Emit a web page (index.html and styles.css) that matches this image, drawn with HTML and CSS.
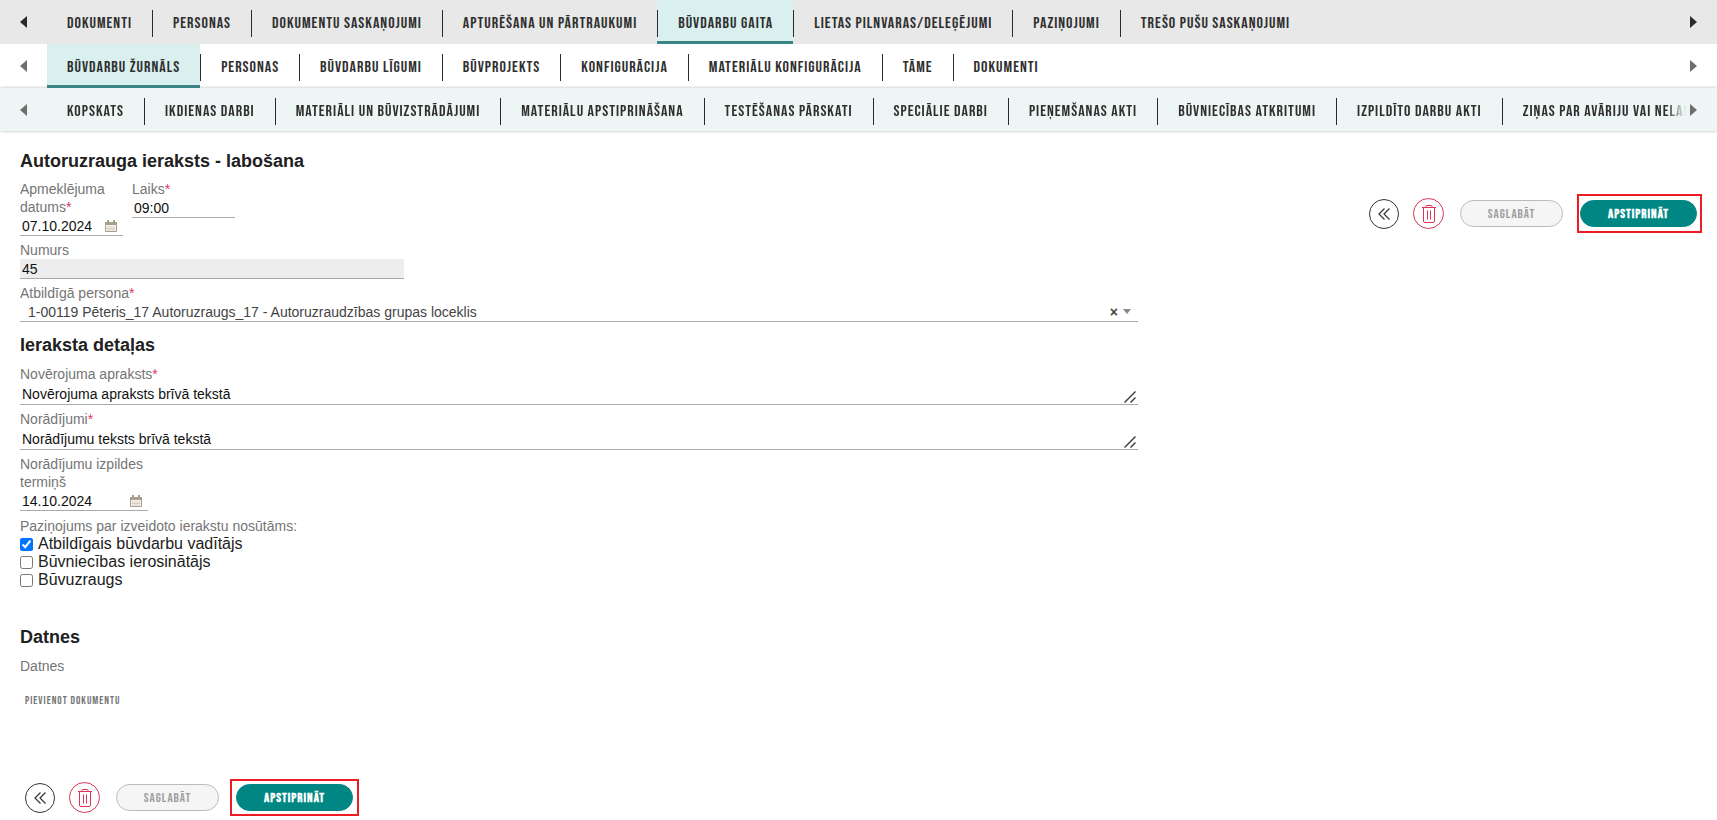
FILE: index.html
```html
<!DOCTYPE html>
<html lang="lv">
<head>
<meta charset="utf-8">
<meta name="viewport" content="width=device-width, initial-scale=1">
<title>Autoruzrauga ieraksts - labošana</title>
<link rel="stylesheet" href="styles.css">
</head>
<body>
<svg class="sprite" aria-hidden="true">
  <symbol id="i-left" viewBox="0 0 7 12"><path d="M7 0v12L0 6z"/></symbol>
  <symbol id="i-right" viewBox="0 0 7 12"><path d="M0 0v12l7-6z"/></symbol>
  <symbol id="i-back" viewBox="0 0 14 14"><path d="M7.500 1.500L2 7l5.500 5.500M12.500 1.500L7 7l5.500 5.500" fill="none" stroke="currentColor" stroke-width="1.200"/></symbol>
  <symbol id="i-trash" viewBox="0 0 16 18"><path d="M1 2.500h14M5 2.500V1.500Q5 .5 6 .5h4q1 0 1 1v1M2.500 2.500v13.500q0 1.500 1.500 1.500h8q1.500 0 1.500-1.500V2.500M6.500 5.500v9M9.500 5.500v9" fill="none" stroke="currentColor"/></symbol>
  <symbol id="i-cal" viewBox="0 0 12 12"><path d="M.5 2.500h11v9H.5z" fill="#f6f2ec" stroke="#a89f90"/><path d="M0 2h12v3H0zM2 0h2v2H2zM8 0h2v2H8z" fill="#a89f90"/><path d="M3 6v5M5 6v5M7 6v5M9 6v5M1 8.500h10" stroke="#c9c1b4" fill="none" stroke-width=".6"/></symbol>
</svg>

<nav class="bar bar-top" aria-label="Lieta">
  <button class="arrow" aria-label="Iepriekšējie"><svg><use href="#i-left"/></svg></button>
  <div class="tabs">
    <a class="tab" href="#">DOKUMENTI</a><a class="tab" href="#">PERSONAS</a><a class="tab" href="#">DOKUMENTU SASKAŅOJUMI</a><a class="tab" href="#">APTURĒŠANA UN PĀRTRAUKUMI</a><a class="tab active" href="#">BŪVDARBU GAITA</a><a class="tab" href="#">LIETAS PILNVARAS/DELEĢĒJUMI</a><a class="tab" href="#">PAZIŅOJUMI</a><a class="tab" href="#">TREŠO PUŠU SASKAŅOJUMI</a>
  </div>
  <button class="arrow" aria-label="Nākamie"><svg><use href="#i-right"/></svg></button>
</nav>
<nav class="bar bar-mid" aria-label="Būvdarbu gaita">
  <button class="arrow" aria-label="Iepriekšējie"><svg><use href="#i-left"/></svg></button>
  <div class="tabs">
    <a class="tab active" href="#">BŪVDARBU ŽURNĀLS</a><a class="tab" href="#">PERSONAS</a><a class="tab" href="#">BŪVDARBU LĪGUMI</a><a class="tab" href="#">BŪVPROJEKTS</a><a class="tab" href="#">KONFIGURĀCIJA</a><a class="tab" href="#">MATERIĀLU KONFIGURĀCIJA</a><a class="tab" href="#">TĀME</a><a class="tab" href="#">DOKUMENTI</a>
  </div>
  <button class="arrow" aria-label="Nākamie"><svg><use href="#i-right"/></svg></button>
</nav>
<nav class="bar bar-low" aria-label="Būvdarbu žurnāls">
  <button class="arrow" aria-label="Iepriekšējie"><svg><use href="#i-left"/></svg></button>
  <div class="tabs fade">
    <a class="tab" href="#">KOPSKATS</a><a class="tab" href="#">IKDIENAS DARBI</a><a class="tab" href="#">MATERIĀLI UN BŪVIZSTRĀDĀJUMI</a><a class="tab" href="#">MATERIĀLU APSTIPRINĀŠANA</a><a class="tab" href="#">TESTĒŠANAS PĀRSKATI</a><a class="tab" href="#">SPECIĀLIE DARBI</a><a class="tab" href="#">PIEŅEMŠANAS AKTI</a><a class="tab" href="#">BŪVNIECĪBAS ATKRITUMI</a><a class="tab" href="#">IZPILDĪTO DARBU AKTI</a><a class="tab" href="#">ZIŅAS PAR AVĀRIJU VAI NELAIMES GADĪJUMU</a>
  </div>
  <button class="arrow" aria-label="Nākamie"><svg><use href="#i-right"/></svg></button>
</nav>

<main class="page">
  <form class="form">
    <h1 class="heading">Autoruzrauga ieraksts - labošana</h1>
    <div class="row">
      <div class="field short">
        <label for="date">Apmeklējuma datums<span class="req">*</span></label>
        <div class="line"><input id="date" value="07.10.2024"><svg class="cal"><use href="#i-cal"/></svg></div>
      </div>
      <div class="field short">
        <label for="time">Laiks<span class="req">*</span></label>
        <div class="line"><input id="time" value="09:00"></div>
      </div>
    </div>
    <div class="field number">
      <label for="num">Numurs</label>
      <div class="line locked"><input id="num" value="45" readonly></div>
    </div>
    <div class="field">
      <label for="person">Atbildīgā persona<span class="req">*</span></label>
      <div class="line pick">
        <select id="person"><option>1-00119 Pēteris_17 Autoruzraugs_17 - Autoruzraudzības grupas loceklis</option></select>
        <button type="button" class="clear" aria-label="Notīrīt">×</button>
        <svg class="caret" viewBox="0 0 8 5"><path d="M0 0h8L4 5z"/></svg>
      </div>
    </div>
    <h2 class="heading details">Ieraksta detaļas</h2>
    <div class="field">
      <label for="obs">Novērojuma apraksts<span class="req">*</span></label>
      <div class="line area"><textarea id="obs" rows="1">Novērojuma apraksts brīvā tekstā</textarea><svg class="grip" viewBox="0 0 12 12"><path d="M.5 11.500l11-11M6.500 11.500l5-5"/></svg></div>
    </div>
    <div class="field">
      <label for="ins">Norādījumi<span class="req">*</span></label>
      <div class="line area"><textarea id="ins" rows="1">Norādījumu teksts brīvā tekstā</textarea><svg class="grip" viewBox="0 0 12 12"><path d="M.5 11.500l11-11M6.500 11.500l5-5"/></svg></div>
    </div>
    <div class="field term">
      <label for="due">Norādījumu izpildes termiņš</label>
      <div class="line"><input id="due" value="14.10.2024"><svg class="cal"><use href="#i-cal"/></svg></div>
    </div>
    <fieldset class="checks">
      <legend>Paziņojums par izveidoto ierakstu nosūtāms:</legend>
      <label><input type="checkbox" checked>Atbildīgais būvdarbu vadītājs</label>
      <label><input type="checkbox">Būvniecības ierosinātājs</label>
      <label><input type="checkbox">Būvuzraugs</label>
    </fieldset>
    <section class="files">
      <h2 class="heading">Datnes</h2>
      <p class="caption">Datnes</p>
      <button type="button" class="attach">PIEVIENOT DOKUMENTU</button>
    </section>
    <div class="actions actions-foot">
      <button type="button" class="round" aria-label="Atpakaļ"><svg class="ic-back"><use href="#i-back"/></svg></button>
      <button type="button" class="round danger" aria-label="Dzēst"><svg class="ic-trash"><use href="#i-trash"/></svg></button>
      <button type="button" class="pill" disabled>SAGLABĀT</button>
      <div class="mark"><button type="button" class="pill primary">APSTIPRINĀT</button></div>
    </div>
  </form>
  <div class="actions actions-side">
    <button type="button" class="round" aria-label="Atpakaļ"><svg class="ic-back"><use href="#i-back"/></svg></button>
    <button type="button" class="round danger" aria-label="Dzēst"><svg class="ic-trash"><use href="#i-trash"/></svg></button>
    <button type="button" class="pill" disabled>SAGLABĀT</button>
    <div class="mark"><button type="button" class="pill primary">APSTIPRINĀT</button></div>
  </div>
</main>
</body>
</html>
```
FILE: styles.css
```css
* { box-sizing: border-box; }
:root {
  --sans: "Liberation Sans", Arial, sans-serif;
  --narrow: "Bebas Neue", "Liberation Sans Narrow", "Arial Narrow", "Liberation Sans", sans-serif;
}
body { margin: 0; background: #fff; color: #212121; font: 14px/18px var(--sans); }
button, input, select, textarea { font: inherit; color: inherit; margin: 0; padding: 0; border: 0; background: none; }
.sprite { position: absolute; width: 0; height: 0; }

.bar { display: flex; align-items: stretch; height: 44px; }
.bar-top { background: #e8e8e8; }
.bar-mid { background: #fff; }
.bar-low { height: 43px; background: #edf6f5; box-shadow: 0 0 3px rgba(0, 0, 0, .3); }
.arrow { flex: none; width: 47px; display: flex; align-items: center; justify-content: center; fill: #6e6e6e; }
.bar-top .arrow { fill: #2a2a2a; }
.arrow svg { width: 7px; height: 12px; }
.tabs { flex: 1; min-width: 0; display: flex; overflow: hidden; }
.fade { margin-right: -16px; mask-image: linear-gradient(to left, transparent, #000 20px); }
.tab { flex: none; display: flex; align-items: center; padding: 7px 20px 0; position: relative; white-space: nowrap; color: #2f2f2f; text-decoration: none; font: 16px/20px var(--narrow); letter-spacing: 1px; border-bottom: 3px solid transparent; }
.tab + .tab { padding-left: 21px; }
.tab + .tab::before { content: ""; position: absolute; left: 0; top: 10px; width: 1px; height: 27px; background: #2a2a2a; }
.tab.active { background: #d9f0ef; border-bottom-color: #3a8583; }

.page { display: flex; justify-content: space-between; align-items: flex-start; padding: 0 20px; }
.form { flex: 0 1 1118px; min-width: 0; }
.heading { margin: 0; font: bold 18px/24px var(--sans); }
h1.heading { padding: 18px 0 7px; }
.details { padding: 6px 0 8px; }
.row { display: flex; align-items: flex-start; gap: 9px; }
.field { margin-bottom: 5px; color: #757575; }
.field label { display: block; }
.short { width: 103px; }
.number { width: 384px; max-width: 100%; }
.term { width: 128px; }
.req { color: #dc3558; }
.line { display: flex; align-items: center; height: 20px; padding: 0 2px; border-bottom: 1px solid #a9a9a9; color: #111; }
.line input { flex: 1; width: 0; }
.locked { background: #ededed; }
.cal { flex: none; width: 12px; height: 12px; margin-right: 4px; }
.pick { padding: 0 7px 0 8px; color: #444; }
.pick select { flex: 1; min-width: 0; appearance: none; }
.clear { font: bold 14px/18px var(--sans); margin-right: 5px; }
.caret { width: 8px; height: 5px; fill: #888; }
.area { height: 22px; }
.area textarea { flex: 1; height: 18px; resize: none; overflow: hidden; }
.grip { width: 12px; height: 12px; align-self: flex-end; margin-bottom: 1px; stroke: #444; stroke-width: 1.5; fill: none; }

.checks { margin: 0; padding: 0; border: 0; }
.checks legend { padding: 1px 0 0; color: #757575; }
.checks label { display: flex; align-items: center; gap: 5px; font-size: 16px; }
.checks input { width: 13px; height: 13px; }
.files { padding-top: 36px; }
.caption { margin: 8px 0 15px; color: #757575; }
.attach { padding: 0 5px; color: #757575; font: 11px/18px var(--narrow); letter-spacing: 1px; }

.actions { display: flex; align-items: center; }
.actions-side { flex: none; padding: 63px 0 0; margin-right: -5px; }
.actions-foot { padding: 69px 0 0 5px; }
.round { flex: none; width: 30px; height: 30px; display: grid; place-items: center; border: 1px solid #333; border-radius: 50%; color: #333; }
.danger { width: 31px; height: 31px; border-color: #dc3558; color: #dc3558; margin: 0 16px 0 14px; }
.ic-back { width: 14px; height: 14px; }
.ic-trash { width: 16px; height: 18px; }
.pill { height: 27px; width: 103px; border: 1px solid #bbb; border-radius: 14px; background: #f5f5f5; color: #9e9e9e; font: 13px/18px var(--narrow); letter-spacing: 1px; }
.primary { display: block; width: 117px; border-color: #008783; background: #008783; color: #fff; font-weight: bold; }
.mark { border: 2px solid #ed1c24; padding: 4px 3px 4px 1px; margin-left: 14px; }
.actions-foot .mark { padding: 3px 4px; margin-left: 11px; }
```
